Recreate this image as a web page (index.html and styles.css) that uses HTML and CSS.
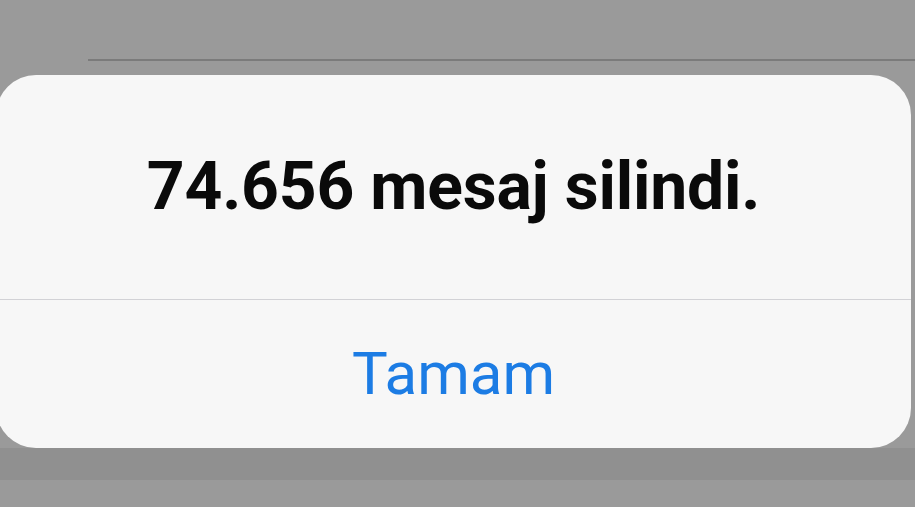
FILE: index.html
```html
<!DOCTYPE html>
<html lang="tr">
<head>
<meta charset="utf-8">
<title>Uyarı</title>
<link rel="stylesheet" href="styles.css">
</head>
<body>
<div class="screen">
  <div class="behind-line"></div>
  <div class="alert">
    <div class="alert-title">74.656 mesaj silindi.</div>
    <div class="alert-divider"></div>
    <div class="alert-action">Tamam</div>
  </div>
  <div class="lower-band"></div>
</div>
</body>
</html>
```
FILE: styles.css
```css
html, body {
  margin: 0;
  padding: 0;
  background: #9a9a9a;
  width: 915px;
  height: 507px;
  overflow: hidden;
}

.screen {
  display: flex;
  flex-direction: column;
  width: 915px;
  height: 507px;
  font-family: Roboto, "Noto Sans", "Liberation Sans", sans-serif;
}

.behind-line {
  margin-top: 59px;
  margin-left: 88px;
  height: 2px;
  background: #7b7b7b;
}

.alert {
  margin-top: 14px;
  margin-left: -4px;
  width: 915px;
  height: 373px;
  background: #f7f7f7;
  border-radius: 40px;
  display: flex;
  flex-direction: column;
}

.alert-title {
  height: 224px;
  display: flex;
  align-items: center;
  justify-content: center;
  font-size: 66px;
  line-height: 66px;
  font-weight: 700;
  color: #0a0a0a;
  letter-spacing: -0.2px;
}

.alert-divider {
  height: 1px;
  background: #d2d2d6;
}

.alert-action {
  flex: 1;
  display: flex;
  align-items: center;
  justify-content: center;
  font-size: 60px;
  line-height: 60px;
  font-weight: 400;
  color: #1c7ce4;
}

.lower-band {
  height: 32px;
  background: #909090;
}
```
